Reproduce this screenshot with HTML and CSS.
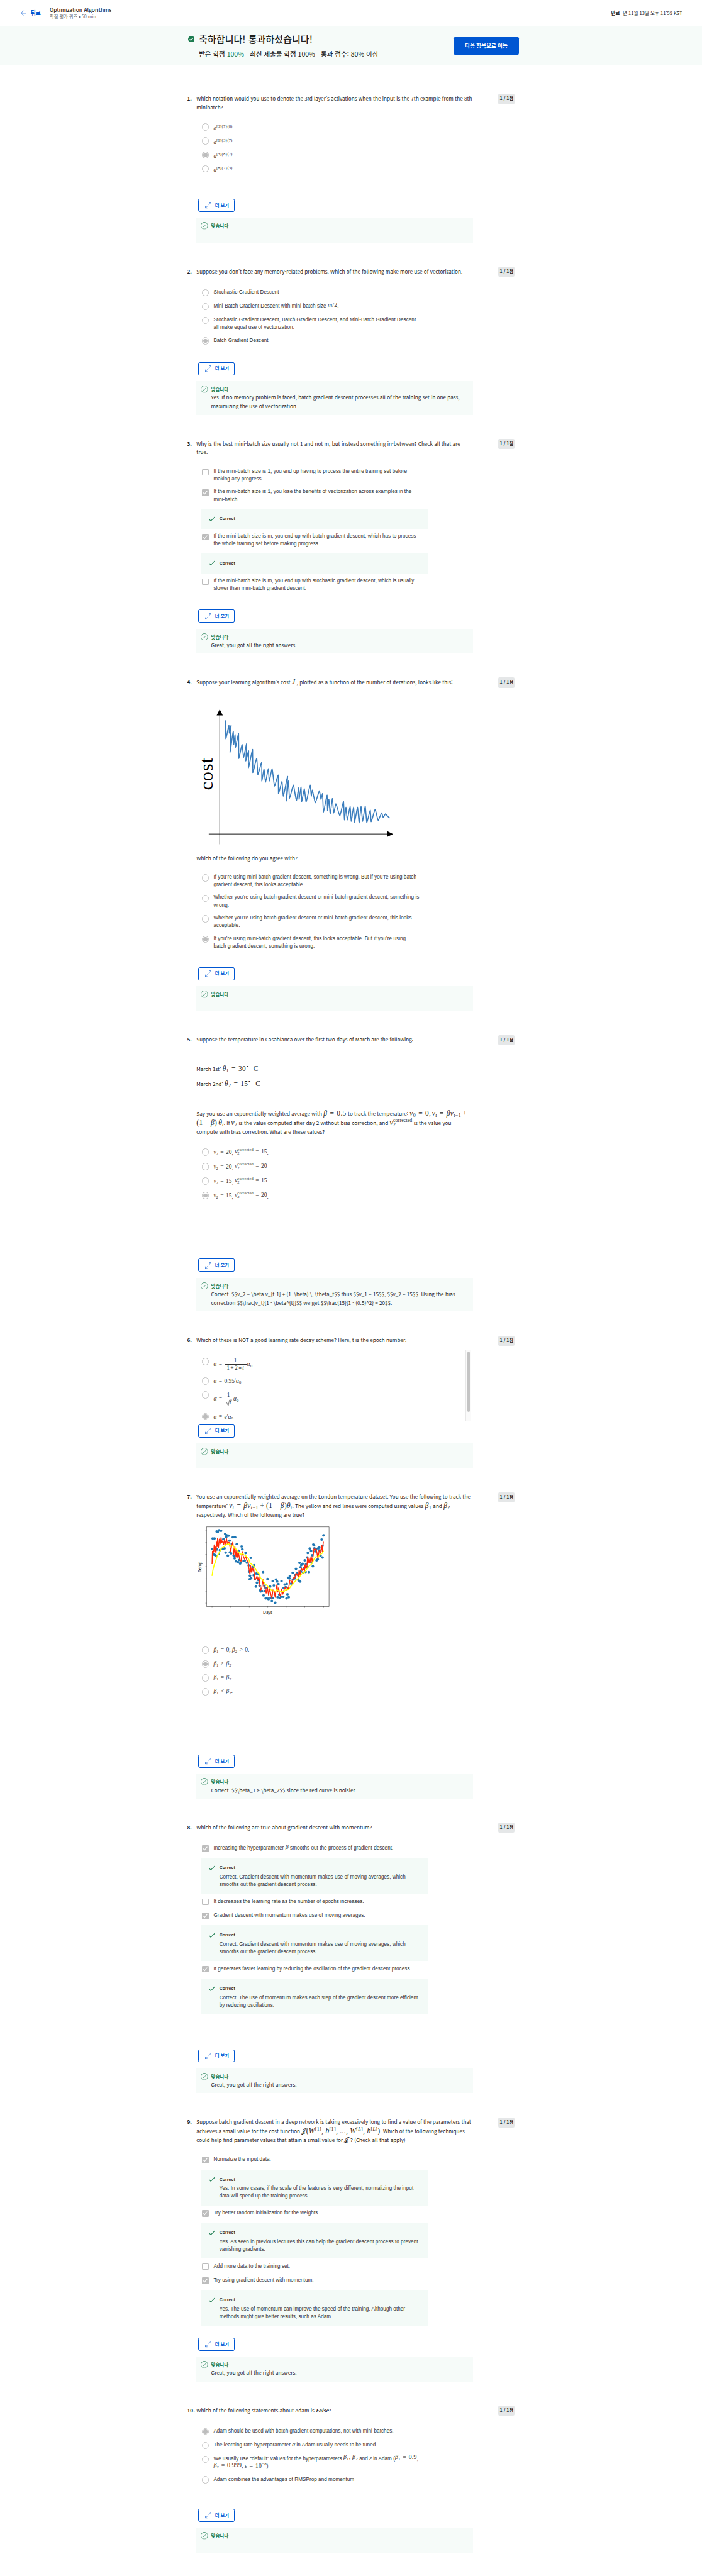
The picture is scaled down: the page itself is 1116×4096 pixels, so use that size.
FILE: index.html
```html
<!DOCTYPE html>
<html lang="ko">
<head>
<meta charset="utf-8">
<title>Optimization Algorithms</title>
<link rel="stylesheet" href="styles.css">
</head>
<body>
<svg width="0" height="0" class="defs" aria-hidden="true">
  <symbol id="i-expand" viewBox="0 0 18 18"><path d="M10.2 7.8 16.8 1.2M11.600 1h5.400v5.400M7.800 10.200 1.200 16.800M1 11.600v5.400h5.400" fill="none" stroke="currentColor" stroke-width="1.200"/></symbol>
  <symbol id="i-ok" viewBox="0 0 20 20"><circle cx="10" cy="10" r="9.300" fill="none" stroke="currentColor" stroke-width="1.200"/><path d="M5.600 10.500l2.900 2.800 5.800-6.500" fill="none" stroke="currentColor" stroke-width="1.200"/></symbol>
  <symbol id="i-check" viewBox="0 0 18 14"><path d="M.8 7.800l4.600 4.800L17.200.8" fill="none" stroke="currentColor" stroke-width="1.900"/></symbol>
  <symbol id="i-tick" viewBox="0 0 18 18"><path d="M3.500 9.200l3.700 3.900L14.500 4.500" fill="none" stroke="#fff" stroke-width="2"/></symbol>
</svg>

<header class="topbar">
  <a class="back"><svg class="back-icon" viewBox="0 0 16 16"><path d="M15.500 8H1.200M7.500 1 .8 8l6.700 7" fill="none" stroke="currentColor" stroke-width="1.200"/></svg>뒤로</a>
  <div class="course"><div class="course-title">Optimization Algorithms</div><div class="course-meta">학점 평가 퀴즈 • 50 min</div></div>
  <div class="due"><b>만료</b><span>년 11월 13일 오후 11:59 KST</span></div>
</header>

<div class="banner">
  <svg class="pass-icon" viewBox="0 0 18 18"><circle cx="9" cy="9" r="9" fill="#1d7c50"/><path d="M4.500 9.300l3 3 5.800-6.300" fill="none" stroke="#fff" stroke-width="2"/></svg>
  <div class="pass">
    <h1>축하합니다! 통과하셨습니다!</h1>
    <div class="scores"><span><b>받은 학점</b> <em>100%</em></span><span><b>최신 제출물 학점</b> 100%</span><span><b>통과 점수:</b> 80% 이상</span></div>
  </div>
  <button class="next">다음 항목으로 이동</button>
</div>

<main>

<section class="q">
  <div class="num">1.</div>
  <div class="body">
    <div class="work work-1">
      <div class="prompt two"><p>Which notation would you use to denote the 3rd layer’s activations when the input is the 7th example from the 8th<br>minibatch?</p></div>
      <div class="opts">
        <div class="opt"><i class="radio"></i><div class="lab"><span class="m"><i>a</i><sup>[3]{7}(8)</sup></span></div></div>
        <div class="opt"><i class="radio"></i><div class="lab"><span class="m"><i>a</i><sup>[8]{3}(7)</sup></span></div></div>
        <div class="opt"><i class="radio on"></i><div class="lab"><span class="m"><i>a</i><sup>[3]{8}(7)</sup></span></div></div>
        <div class="opt"><i class="radio"></i><div class="lab"><span class="m"><i>a</i><sup>[8]{7}(3)</sup></span></div></div>
      </div>
    </div>
    <button class="more"><svg><use href="#i-expand"/></svg>더 보기</button>
    <div class="fb"><svg><use href="#i-ok"/></svg><div><b>맞습니다</b></div></div>
  </div>
  <div class="pts">1 / 1점</div>
</section>

<section class="q">
  <div class="num">2.</div>
  <div class="body">
    <div class="work work-2">
      <div class="prompt one"><p>Suppose you don't face any memory-related problems. Which of the following make more use of vectorization.</p></div>
      <div class="opts">
        <div class="opt"><i class="radio"></i><div class="lab"><span>Stochastic Gradient Descent</span></div></div>
        <div class="opt"><i class="radio"></i><div class="lab"><span>Mini-Batch Gradient Descent with mini-batch size <span class="m up big"><i>m</i>/2</span>.</span></div></div>
        <div class="opt"><i class="radio"></i><div class="lab"><span>Stochastic Gradient Descent, Batch Gradient Descent, and Mini-Batch Gradient Descent<br>all make equal use of vectorization.</span></div></div>
        <div class="opt"><i class="radio on"></i><div class="lab"><span>Batch Gradient Descent</span></div></div>
      </div>
    </div>
    <button class="more"><svg><use href="#i-expand"/></svg>더 보기</button>
    <div class="fb"><svg><use href="#i-ok"/></svg><div><b>맞습니다</b><p>Yes. If no memory problem is faced, batch gradient descent processes all of the training set in one pass,<br>maximizing the use of vectorization.</p></div></div>
  </div>
  <div class="pts">1 / 1점</div>
</section>

<section class="q">
  <div class="num">3.</div>
  <div class="body">
    <div class="work work-3">
      <div class="prompt two"><p>Why is the best mini-batch size usually not 1 and not m, but instead something in-between? Check all that are<br>true.</p></div>
      <div class="opts">
        <div class="opt"><i class="box"></i><div class="lab"><span>If the mini-batch size is 1, you end up having to process the entire training set before<br>making any progress.</span></div></div>
        <div class="opt"><i class="box on"><svg><use href="#i-tick"/></svg></i><div class="lab"><span>If the mini-batch size is 1, you lose the benefits of vectorization across examples in the<br>mini-batch.</span></div></div>
        <div class="note"><svg><use href="#i-check"/></svg><div><b>Correct</b></div></div>
        <div class="opt"><i class="box on"><svg><use href="#i-tick"/></svg></i><div class="lab"><span>If the mini-batch size is m, you end up with batch gradient descent, which has to process<br>the whole training set before making progress.</span></div></div>
        <div class="note"><svg><use href="#i-check"/></svg><div><b>Correct</b></div></div>
        <div class="opt"><i class="box"></i><div class="lab"><span>If the mini-batch size is m, you end up with stochastic gradient descent, which is usually<br>slower than mini-batch gradient descent.</span></div></div>
      </div>
    </div>
    <button class="more"><svg><use href="#i-expand"/></svg>더 보기</button>
    <div class="fb"><svg><use href="#i-ok"/></svg><div><b>맞습니다</b><p>Great, you got all the right answers.</p></div></div>
  </div>
  <div class="pts">1 / 1점</div>
</section>

<section class="q">
  <div class="num">4.</div>
  <div class="body">
    <div class="work work-4">
      <div class="prompt cost">
        <p>Suppose your learning algorithm’s cost <span class="m"><i>J</i></span> , plotted as a function of the number of iterations, looks like this:</p>
        <svg class="cost-chart" viewBox="79 210 921 620" preserveAspectRatio="none">
          <path d="M186 817V240M136 772H960" stroke="#000" stroke-width="2.600"/>
          <path d="M186 226l14 27h-28zM977 772l-27-13v26z"/>
          <path id="cost-line" fill="none" stroke="#3a7dbd" stroke-width="4.600" stroke-linecap="round" stroke-linejoin="round"/>
          <text class="cost-label" transform="translate(154 580) rotate(-90)">cost</text>
        </svg>
        <p class="after">Which of the following do you agree with?</p>
      </div>
      <div class="opts">
        <div class="opt"><i class="radio"></i><div class="lab"><span>If you’re using mini-batch gradient descent, something is wrong. But if you’re using batch<br>gradient descent, this looks acceptable.</span></div></div>
        <div class="opt"><i class="radio"></i><div class="lab"><span>Whether you’re using batch gradient descent or mini-batch gradient descent, something is<br>wrong.</span></div></div>
        <div class="opt"><i class="radio"></i><div class="lab"><span>Whether you’re using batch gradient descent or mini-batch gradient descent, this looks<br>acceptable.</span></div></div>
        <div class="opt"><i class="radio on"></i><div class="lab"><span>If you’re using mini-batch gradient descent, this looks acceptable. But if you’re using<br>batch gradient descent, something is wrong.</span></div></div>
      </div>
    </div>
    <button class="more"><svg><use href="#i-expand"/></svg>더 보기</button>
    <div class="fb"><svg><use href="#i-ok"/></svg><div><b>맞습니다</b></div></div>
  </div>
  <div class="pts">1 / 1점</div>
</section>

<section class="q">
  <div class="num">5.</div>
  <div class="body">
    <div class="work work-5">
      <div class="prompt casa">
        <p>Suppose the temperature in Casablanca over the first two days of March are the following:</p>
        <p class="m1">March 1st: <span class="m"><i>θ</i><sub>1</sub><u>=</u>30<sup>∘</sup>&nbsp; C</span></p>
        <p class="m2">March 2nd: <span class="m"><i>θ</i><sub>2</sub><u>=</u>15<sup>∘</sup>&nbsp; C</span></p>
        <p class="say">Say you use an exponentially weighted average with <span class="m"><i>β</i><u>=</u>0.5</span> to track the temperature: <span class="m"><i>v</i><sub>0</sub><u>=</u>0</span>, <span class="m"><i>v</i><sub class="it">t</sub><u>=</u><i>βv</i><sub><i>t</i>−1</sub><s>+</s></span><br><span class="m">(1<s>−</s><i>β</i>)<tt></tt><i>θ</i><sub class="it">t</sub></span>. If <span class="m"><i>v</i><sub>2</sub></span> is the value computed after day 2 without bias correction, and <span class="m"><i>v</i><span class="stack"><span>corrected</span><span>2</span></span></span> is the value you<br>compute with bias correction. What are these values?</p>
      </div>
      <div class="opts tall">
        <div class="opt"><i class="radio"></i><div class="lab"><span><span class="m dn"><i>v</i><sub>2</sub><u>=</u>20</span><span class="lo">,</span> <span class="m"><i>v</i><span class="stack"><span>corrected</span><span>2</span></span><u>=</u>15</span><span class="lo">.</span></span></div></div>
        <div class="opt"><i class="radio"></i><div class="lab"><span><span class="m dn"><i>v</i><sub>2</sub><u>=</u>20</span><span class="lo">,</span> <span class="m"><i>v</i><span class="stack"><span>corrected</span><span>2</span></span><u>=</u>20</span><span class="lo">.</span></span></div></div>
        <div class="opt"><i class="radio"></i><div class="lab"><span><span class="m dn"><i>v</i><sub>2</sub><u>=</u>15</span><span class="lo">,</span> <span class="m"><i>v</i><span class="stack"><span>corrected</span><span>2</span></span><u>=</u>15</span><span class="lo">.</span></span></div></div>
        <div class="opt"><i class="radio on"></i><div class="lab"><span><span class="m dn"><i>v</i><sub>2</sub><u>=</u>15</span><span class="lo">,</span> <span class="m"><i>v</i><span class="stack"><span>corrected</span><span>2</span></span><u>=</u>20</span><span class="lo">.</span></span></div></div>
      </div>
    </div>
    <button class="more"><svg><use href="#i-expand"/></svg>더 보기</button>
    <div class="fb"><svg><use href="#i-ok"/></svg><div><b>맞습니다</b><p>Correct. $$v_2 = \beta v_{t-1} + (1- \beta) \, \theta_t$$ thus $$v_1 = 15$$, $$v_2 = 15$$. Using the bias<br>correction $$\frac{v_t}{1 - \beta^{t}}$$ we get $$\frac{15}{1 - (0.5)^2} = 20$$.</p></div></div>
  </div>
  <div class="pts">1 / 1점</div>
</section>

<section class="q">
  <div class="num">6.</div>
  <div class="body">
    <div class="work work-6">
      <div class="prompt decay"><p>Which of these is NOT a good learning rate decay scheme? Here, t is the epoch number.</p></div>
      <div class="scroll">
        <div class="opts">
          <div class="opt h40"><i class="radio"></i><div class="lab"><span class="m row"><i>α</i><u>=</u><span class="frac wide"><span>1</span><span>1<s>+</s>2<s class="ast">*</s><i>t</i></span></span><i>α</i><sub>0</sub></span></div></div>
          <div class="opt"><i class="radio"></i><div class="lab"><span class="m"><i>α</i><u>=</u>0.95<sup class="it">t</sup><i>α</i><sub>0</sub></span></div></div>
          <div class="opt h45"><i class="radio"></i><div class="lab"><span class="m row"><i>α</i><u>=</u><span class="frac"><span>1</span><span class="root"><svg viewBox="0 0 18 20"><path d="M.5 11.500l2.500-1.500 4 8.800L10.500 2H18" fill="none" stroke="currentColor" stroke-width="1.200"/></svg><i>t</i></span></span><i>α</i><sub>0</sub></span></div></div>
          <div class="opt"><i class="radio on"></i><div class="lab"><span class="m"><i>α</i><u>=</u><i>e</i><sup class="it">t</sup><i>α</i><sub>0</sub></span></div></div>
        </div>
        <div class="track"><div class="thumb"></div></div>
      </div>
    </div>
    <button class="more"><svg><use href="#i-expand"/></svg>더 보기</button>
    <div class="fb"><svg><use href="#i-ok"/></svg><div><b>맞습니다</b></div></div>
  </div>
  <div class="pts">1 / 1점</div>
</section>

<section class="q">
  <div class="num">7.</div>
  <div class="body">
    <div class="work work-7">
      <div class="prompt london">
        <p>You use an exponentially weighted average on the London temperature dataset. You use the following to track the<br>temperature: <span class="m"><i>v</i><sub class="it">t</sub><u>=</u><i>βv</i><sub><i>t</i>−1</sub><s>+</s>(1<s>−</s><i>β</i>)<i>θ</i><sub class="it">t</sub></span>. The yellow and red lines were computed using values <span class="m"><i>β</i><sub>1</sub></span> and <span class="m"><i>β</i><sub>2</sub></span><br>respectively. Which of the following are true?</p>
        <svg class="temp-chart" viewBox="79 210 621 440" preserveAspectRatio="none">
          <g id="temp-dots" fill="#1f77b4"></g>
          <polyline fill="none" stroke="#ff2a0a" stroke-width="4.400" stroke-linejoin="round" points="151,402 153,340 158,345 161,310 164,345 168,318 169,347 172,297 175,318 176,280 180,325 184,283 188,305 192,275 196,300 200,290 204,310 208,285 213,308 217,280 222,310 226,298 230,300 236,342 240,318 246,297 250,355 255,318 260,368 263,335 269,372 271,345 277,380 283,388 289,342 293,362 299,378 305,366 310,385 316,390 319,420 324,450 327,410 330,440 334,420 338,435 341,420 346,475 351,472 356,460 360,478 365,462 369,500 373,525 378,515 383,475 388,512 392,510 398,540 403,510 409,550 414,520 418,540 424,565 429,525 435,530 439,560 443,525 447,500 451,535 455,515 459,545 464,555 468,520 474,545 480,522 485,512 491,525 496,515 500,520 506,478 511,480 516,492 521,468 528,468 534,445 540,455 545,462 548,430 553,455 558,420 564,433 569,425 573,435 575,405 580,425 584,410 587,370 590,395 594,372 598,395 603,365 608,390 613,355 616,330 622,332 626,330 630,350 634,375 640,336 646,350 651,312 654,340 659,295"/>
          <polyline fill="none" stroke="#ffff00" stroke-width="4.800" stroke-linejoin="round" points="151,458 155,430 161,405 165,396 170,378 175,362 181,352 187,340 192,328 200,322 207,318 215,308 222,307 229,306 236,318 246,314 252,325 260,330 268,338 276,350 283,356 290,351 297,358 304,361 312,370 318,378 325,398 332,403 338,408 344,416 352,430 358,440 366,447 372,468 380,475 387,486 395,498 403,505 411,515 418,520 425,530 433,527 440,533 447,524 455,528 462,533 470,530 478,534 486,525 496,523 503,520 510,508 518,500 525,490 533,480 541,474 549,465 557,452 565,444 573,442 580,430 588,418 595,410 603,404 609,395 614,382 620,372 626,366 633,368 640,362 648,354 654,350 660,338"/>
          <path d="M126 224H685V604H126ZM121 240h5M121 299h5M121 356h5M121 414h5M121 472h5M121 531h5M121 588h5M151 604v6M236 604v6M321 604v6M405 604v6M489 604v6M574 604v6M660 604v6" fill="none" stroke="#000" stroke-width="1.500"/>
          <text class="axis-label" x="405" y="638" text-anchor="middle">Days</text>
          <text class="axis-label" transform="translate(102 415) rotate(-90)" text-anchor="middle">Temp</text>
        </svg>
      </div>
      <div class="opts">
        <div class="opt"><i class="radio"></i><div class="lab"><span class="m"><i>β</i><sub>1</sub><u>=</u>0, <i>β</i><sub>2</sub><u>&gt;</u>0.</span></div></div>
        <div class="opt"><i class="radio on"></i><div class="lab"><span class="m"><i>β</i><sub>1</sub><u>&gt;</u><i>β</i><sub>2</sub>.</span></div></div>
        <div class="opt"><i class="radio"></i><div class="lab"><span class="m"><i>β</i><sub>1</sub><u>=</u><i>β</i><sub>2</sub>.</span></div></div>
        <div class="opt"><i class="radio"></i><div class="lab"><span class="m"><i>β</i><sub>1</sub><u>&lt;</u><i>β</i><sub>2</sub>.</span></div></div>
      </div>
    </div>
    <button class="more"><svg><use href="#i-expand"/></svg>더 보기</button>
    <div class="fb"><svg><use href="#i-ok"/></svg><div><b>맞습니다</b><p>Correct. $$\beta_1 &gt; \beta_2$$ since the red curve is noisier.</p></div></div>
  </div>
  <div class="pts">1 / 1점</div>
</section>

<section class="q">
  <div class="num">8.</div>
  <div class="body">
    <div class="work work-8">
      <div class="prompt one"><p>Which of the following are true about gradient descent with momentum?</p></div>
      <div class="opts">
        <div class="opt"><i class="box on"><svg><use href="#i-tick"/></svg></i><div class="lab"><span>Increasing the hyperparameter <span class="m up big"><i>β</i></span> smooths out the process of gradient descent.</span></div></div>
        <div class="note"><svg><use href="#i-check"/></svg><div><b>Correct</b><p>Correct. Gradient descent with momentum makes use of moving averages, which<br>smooths out the gradient descent process.</p></div></div>
        <div class="opt"><i class="box"></i><div class="lab"><span>It decreases the learning rate as the number of epochs increases.</span></div></div>
        <div class="opt"><i class="box on"><svg><use href="#i-tick"/></svg></i><div class="lab"><span>Gradient descent with momentum makes use of moving averages.</span></div></div>
        <div class="note"><svg><use href="#i-check"/></svg><div><b>Correct</b><p>Correct. Gradient descent with momentum makes use of moving averages, which<br>smooths out the gradient descent process.</p></div></div>
        <div class="opt"><i class="box on"><svg><use href="#i-tick"/></svg></i><div class="lab"><span>It generates faster learning by reducing the oscillation of the gradient descent process.</span></div></div>
        <div class="note"><svg><use href="#i-check"/></svg><div><b>Correct</b><p>Correct. The use of momentum makes each step of the gradient descent more efficient<br>by reducing oscillations.</p></div></div>
      </div>
    </div>
    <button class="more"><svg><use href="#i-expand"/></svg>더 보기</button>
    <div class="fb"><svg><use href="#i-ok"/></svg><div><b>맞습니다</b><p>Great, you got all the right answers.</p></div></div>
  </div>
  <div class="pts">1 / 1점</div>
</section>

<section class="q">
  <div class="num">9.</div>
  <div class="body">
    <div class="work work-9">
      <div class="prompt three"><p>Suppose batch gradient descent in a deep network is taking excessively long to find a value of the parameters that<br>achieves a small value for the cost function <span class="m"><span class="cal">𝒥</span>(<i>W</i><sup>[1]</sup>, <i>b</i><sup>[1]</sup>, ..., <i>W</i><sup>[<i>L</i>]</sup>, <i>b</i><sup>[<i>L</i>]</sup>)</span>. Which of the following techniques<br>could help find parameter values that attain a small value for <span class="m"><span class="cal">𝒥</span></span> ? (Check all that apply)</p></div>
      <div class="opts">
        <div class="opt"><i class="box on"><svg><use href="#i-tick"/></svg></i><div class="lab"><span>Normalize the input data.</span></div></div>
        <div class="note"><svg><use href="#i-check"/></svg><div><b>Correct</b><p>Yes. In some cases, if the scale of the features is very different, normalizing the input<br>data will speed up the training process.</p></div></div>
        <div class="opt"><i class="box on"><svg><use href="#i-tick"/></svg></i><div class="lab"><span>Try better random initialization for the weights</span></div></div>
        <div class="note"><svg><use href="#i-check"/></svg><div><b>Correct</b><p>Yes. As seen in previous lectures this can help the gradient descent process to prevent<br>vanishing gradients.</p></div></div>
        <div class="opt"><i class="box"></i><div class="lab"><span>Add more data to the training set.</span></div></div>
        <div class="opt"><i class="box on"><svg><use href="#i-tick"/></svg></i><div class="lab"><span>Try using gradient descent with momentum.</span></div></div>
        <div class="note"><svg><use href="#i-check"/></svg><div><b>Correct</b><p>Yes. The use of momentum can improve the speed of the training. Although other<br>methods might give better results, such as Adam.</p></div></div>
      </div>
    </div>
    <button class="more"><svg><use href="#i-expand"/></svg>더 보기</button>
    <div class="fb"><svg><use href="#i-ok"/></svg><div><b>맞습니다</b><p>Great, you got all the right answers.</p></div></div>
  </div>
  <div class="pts">1 / 1점</div>
</section>

<section class="q">
  <div class="num">10.</div>
  <div class="body">
    <div class="work work-10">
      <div class="prompt one"><p>Which of the following statements about Adam is <strong>False</strong>?</p></div>
      <div class="opts">
        <div class="opt"><i class="radio on"></i><div class="lab"><span>Adam should be used with batch gradient computations, not with mini-batches.</span></div></div>
        <div class="opt"><i class="radio"></i><div class="lab"><span>The learning rate hyperparameter <span class="m"><i>α</i></span> in Adam usually needs to be tuned.</span></div></div>
        <div class="opt"><i class="radio"></i><div class="lab"><span>We usually use “default” values for the hyperparameters <span class="m up big"><i>β</i><sub>1</sub>, <i>β</i><sub>2</sub></span> and <span class="m"><i>ε</i></span> in Adam (<span class="m up big"><i>β</i><sub>1</sub><u>=</u>0.9</span>,<br><span class="m up big"><i>β</i><sub>2</sub><u>=</u>0.999</span>, <span class="m big"><i>ε</i><u>=</u>10<sup>−8</sup></span>)</span></div></div>
        <div class="opt"><i class="radio"></i><div class="lab"><span>Adam combines the advantages of RMSProp and momentum</span></div></div>
      </div>
    </div>
    <button class="more"><svg><use href="#i-expand"/></svg>더 보기</button>
    <div class="fb"><svg><use href="#i-ok"/></svg><div><b>맞습니다</b></div></div>
  </div>
  <div class="pts">1 / 1점</div>
</section>

</main>
<script src="charts.js"></script>
</body>
</html>
```
FILE: styles.css
```css
/* 1rem = 100 layout units */
html { font-size: 58.12px; }
* { box-sizing: border-box; }
body {
  margin: 0;
  height: 4096px;
  overflow: hidden;
  background: #fff;
  color: #1f1f1f;
  font-family: "Noto Sans CJK KR", sans-serif;
  font-size: .14rem;
  line-height: .24rem;
}
p, h1 { margin: 0; }
svg { display: block; }
.defs { position: absolute; }
button { font: inherit; padding: 0; margin: 0; cursor: pointer; }

/* top bar */
.topbar { display: flex; align-items: center; height: .73rem; padding: 0 .54rem 0 .57rem; border-bottom: 1px solid #bbb; }
.back { display: flex; align-items: center; gap: .11rem; width: .79rem; color: #0056d2; font-weight: 700; font-size: .15rem; }
.back-icon { width: .16rem; height: .17rem; }
.course { flex: 1; }
.course-title { font-size: .144rem; font-weight: 500; line-height: .22rem; }
.course-meta { font-size: .125rem; line-height: .2rem; color: #666; }
.due { display: flex; gap: .08rem; font-size: .13rem; }

/* result banner */
.banner { display: flex; height: 1.04rem; padding-left: 5.14rem; background: #f6fbf9; }
.pass-icon { width: .18rem; height: .18rem; margin-top: .25rem; }
.pass { width: 6.96rem; margin-left: .12rem; padding-top: .15rem; }
h1 { font-size: .259rem; line-height: .38rem; font-weight: 500; white-space: nowrap; }
.scores { display: flex; gap: .16rem; margin-top: .06rem; font-size: .181rem; line-height: .3rem; white-space: nowrap; }
.scores b { font-weight: 500; }
.scores em { font-style: normal; color: #1d7c50; }
.next { width: 1.8rem; height: .48rem; margin-top: .28rem; border: 0; border-radius: .04rem; background: #0056d2; color: #fff; font-size: .147rem; font-weight: 700; white-space: nowrap; }

/* questions */
main { display: flex; flex-direction: column; gap: .66rem; width: 8.96rem; margin-left: 5.12rem; padding-top: .8rem; }
.q { display: flex; align-items: flex-start; }
.num { width: .254rem; padding-top: .01rem; font-weight: 700; white-space: nowrap; }
.body { width: 7.56rem; }
.pts { width: .45rem; height: .28rem; margin-left: auto; border-radius: .04rem; background: #e5e7e8; text-align: center; font-size: .12rem; font-weight: 700; line-height: .27rem; white-space: nowrap; }
.work-1 { height: 2.87rem; }
.work-2 { height: 2.61rem; }
.work-3 { height: 4.67rem; }
.work-4 { height: 7.92rem; }
.work-5 { height: 6.12rem; }
.work-6 { height: 2.43rem; }
.work-7 { height: 7.18rem; }
.work-8 { height: 6.2rem; }
.work-9 { height: 6.03rem; }
.work-10 { height: 2.82rem; }

.prompt { padding-top: .01rem; white-space: nowrap; }
.one { height: .59rem; }
.two { height: .79rem; }
.three { height: 1.05rem; }
.three p { line-height: .25rem; }
.cost { height: 5.36rem; }
.casa { height: 3.08rem; }
.decay { height: .41rem; }
.london { height: 4.2rem; }
.london p { line-height: .245rem; }
.casa .m1 { margin-top: .56rem; }
.casa .m2 { margin-top: .175rem; }
.casa .say { margin-top: .57rem; line-height: .25rem; }

.opts { display: flex; flex-direction: column; font-family: "Liberation Sans", sans-serif; color: #333; letter-spacing: .0008rem; line-height: .21rem; white-space: nowrap; }
.opt { display: flex; align-items: flex-start; flex: none; min-height: .24rem; margin-bottom: .14rem; padding-left: .146rem; }
.tall .opt { min-height: .257rem; }
.h40 { height: .4rem; }
.h45 { height: .45rem; }
.lab { display: flex; align-items: center; min-height: .24rem; }
.h40 .lab { height: .4rem; }
.h45 .lab { height: .45rem; }
.radio { flex: none; display: flex; align-items: center; justify-content: center; width: .2rem; height: .2rem; margin: .02rem .12rem 0 0; border: .02rem solid #c1c1c1; border-radius: 50%; }
.radio.on::before { content: ""; width: .11rem; height: .11rem; border-radius: 50%; background: #bdbdbd; }
.box { flex: none; display: block; width: .18rem; height: .18rem; margin: .03rem .13rem 0 .01rem; border: .02rem solid #bdbdbd; border-radius: .02rem; }
.box.on { border: 0; background: #bdbdbd; }
.box svg { width: .18rem; height: .18rem; }

.note { display: flex; flex: none; width: 6.2rem; margin: 0 0 .1rem .126rem; padding: .17rem 0 .16rem .21rem; background: #f3faf7; }
.note svg { width: .18rem; height: .14rem; margin: .03rem .11rem 0 0; color: #1d7c50; }
.note b { display: block; font-size: .12rem; line-height: .22rem; }
.note p { margin-top: .03rem; line-height: .21rem; }
.note div { min-height: .23rem; }
.note:has(p) { height: .98rem; }

.scroll { display: flex; justify-content: space-between; width: 7.51rem; height: 1.92rem; overflow: hidden; }
.scroll .opts { padding-top: .18rem; }
.track { width: .15rem; padding: .03rem .03rem 0; border: solid #e8e8e8; border-width: 0 .01rem; background: #fafafa; }
.thumb { width: .08rem; height: 1.65rem; border-radius: .04rem; background: #c4c4c4; }

.more { display: flex; align-items: center; width: .99rem; height: .36rem; margin: 0 0 .16rem .05rem; padding-left: .16rem; border: 1px solid #0056d2; border-radius: .04rem; background: #fff; color: #0056d2; font-size: .126rem; font-weight: 700; white-space: nowrap; }
.more svg { width: .18rem; height: .18rem; margin-right: .1rem; }

.fb { display: flex; min-height: .68rem; padding: .12rem .12rem .11rem; background: #f6fbf9; white-space: nowrap; }
.fb svg { width: .2rem; height: .2rem; margin-right: .08rem; color: #1d7c50; }
.fb b { display: block; font-size: .129rem; line-height: .21rem; color: #1d7c50; }

/* formulas */
.m { font-family: "Liberation Serif", serif; font-size: .197rem; line-height: 0; letter-spacing: .03em; white-space: nowrap; }
.opts .m { font-size: .163rem; letter-spacing: 0; }
.opts .m.big { font-size: .17rem; letter-spacing: .02em; }
.m i, .it { font-style: italic; }
.m u, .m s { text-decoration: none; margin: 0 .36em; }
.m s { margin: 0 .25em; }
.m tt { margin-right: .17em; }
.m sup, .m sub { font-size: .7em; line-height: 0; }
.m sup { vertical-align: .55em; }
.m sub { vertical-align: -.25em; }
.up { position: relative; top: -.02rem; }
.dn { position: relative; top: .02rem; }
.lo { position: relative; top: .04rem; }
.cal { font-size: .9em; }
.stack { display: inline-flex; flex-direction: column; font-size: .68em; line-height: .85em; vertical-align: .6em; letter-spacing: .003rem; }
.row { display: flex; align-items: center; }
.row sub { position: relative; top: .04rem; }
.frac { display: inline-flex; flex-direction: column; align-items: center; min-width: .23rem; margin-right: .02rem; line-height: .18rem; }
.frac > span:first-child { align-self: stretch; text-align: center; border-bottom: 1px solid #333; line-height: .19rem; }
.wide { width: .605rem; }
.frac s { margin: 0 .15em; }
.frac .ast { position: relative; top: .2em; }
.root { display: flex; }
.root svg { width: .17rem; height: .19rem; margin-right: -.062rem; }
.h45 .frac { padding-top: .02rem; }

strong { font-style: italic; }

/* charts */
.cost-chart { width: 5.522rem; height: 3.875rem; margin-top: .524rem; overflow: visible; }
.after { margin-top: .174rem; }
.cost-label { font-family: "Liberation Serif", serif; font-size: 84px; letter-spacing: 2px; }
.temp-chart { width: 3.723rem; height: 2.526rem; margin-top: .127rem; overflow: visible; }
.axis-label { font-family: "Open Sans", sans-serif; font-size: 19px; fill: #111; }
```
FILE: charts.js
```js
const cost = [212,276,214,355,228,297,230,330,238,296,233,414,248,322,250,380,256,337,258,392,272,332,273,441,288,380,295,436,309,376,305,452,318,408,317,482,336,402,337,503,355,440,360,512,378,457,378,540,388,488,395,545,408,486,412,540,425,486,436,562,453,514,454,596,470,542,476,606,496,520,490,627,500,540,504,616,522,558,536,626,547,568,548,620,557,566,560,630,572,574,580,632,599,558,604,606,608,580,622,635,641,583,648,620,655,595,659,676,676,602,678,670,684,620,690,684,700,617,706,680,716,640,734,692,751,630,755,710,762,655,768,710,781,652,786,716,797,654,801,720,815,655,822,723,831,652,838,716,850,650,857,722,873,668,877,718,895,664,909,712,925,680,932,700,942,684,960,701];
let d = `M${cost[0]} ${cost[1]}`;
for (let i = 2; i < cost.length; i += 2) {
  const [x0, y0, x1, y1] = cost.slice(i - 2, i + 2);
  const k = (y1 - y0) * 0.2;
  const w = (x1 - x0) * 0.35;
  d += `C${x0 + w} ${y0 + k} ${x1 - w} ${y1 - k} ${x1} ${y1}`;
}
document.getElementById('cost-line').setAttribute('d', d);

const dots = [151,330,154,280,162,280,172,246,177,248,183,241,192,243,158,356,164,358,169,362,182,354,173,332,187,335,203,283,211,258,217,264,226,266,216,272,200,330,208,327,213,347,223,361,231,290,233,346,238,351,246,274,256,274,241,306,264,307,250,361,254,374,260,388,269,392,275,382,279,399,282,394,286,318,289,331,272,338,295,387,304,349,310,395,300,385,318,408,320,438,324,457,328,372,323,474,329,469,343,407,336,416,341,455,346,474,351,509,356,490,353,447,361,450,363,478,384,440,368,505,371,527,373,532,379,530,386,551,390,505,396,565,406,567,409,569,404,473,395,515,391,530,416,509,418,563,424,577,429,564,439,586,428,483,433,504,443,475,448,485,454,497,437,545,450,560,459,563,466,558,458,547,468,483,476,558,478,516,483,499,492,496,487,512,491,565,495,546,501,560,498,467,506,459,504,470,512,495,519,443,520,475,528,470,531,455,534,424,539,446,546,480,553,485,550,396,555,417,558,406,564,400,556,437,566,442,572,420,574,384,578,439,585,370,588,349,593,440,580,402,586,415,597,328,603,339,608,360,605,395,611,412,613,309,616,313,618,327,626,329,622,341,628,384,633,379,635,327,640,323,641,337,646,362,651,285,655,370,660,265,655,315];
const group = document.getElementById('temp-dots');
for (let i = 0; i < dots.length; i += 2) {
  const c = document.createElementNS('http://www.w3.org/2000/svg', 'circle');
  c.setAttribute('cx', dots[i]);
  c.setAttribute('cy', dots[i + 1]);
  c.setAttribute('r', 6);
  group.append(c);
}
```
